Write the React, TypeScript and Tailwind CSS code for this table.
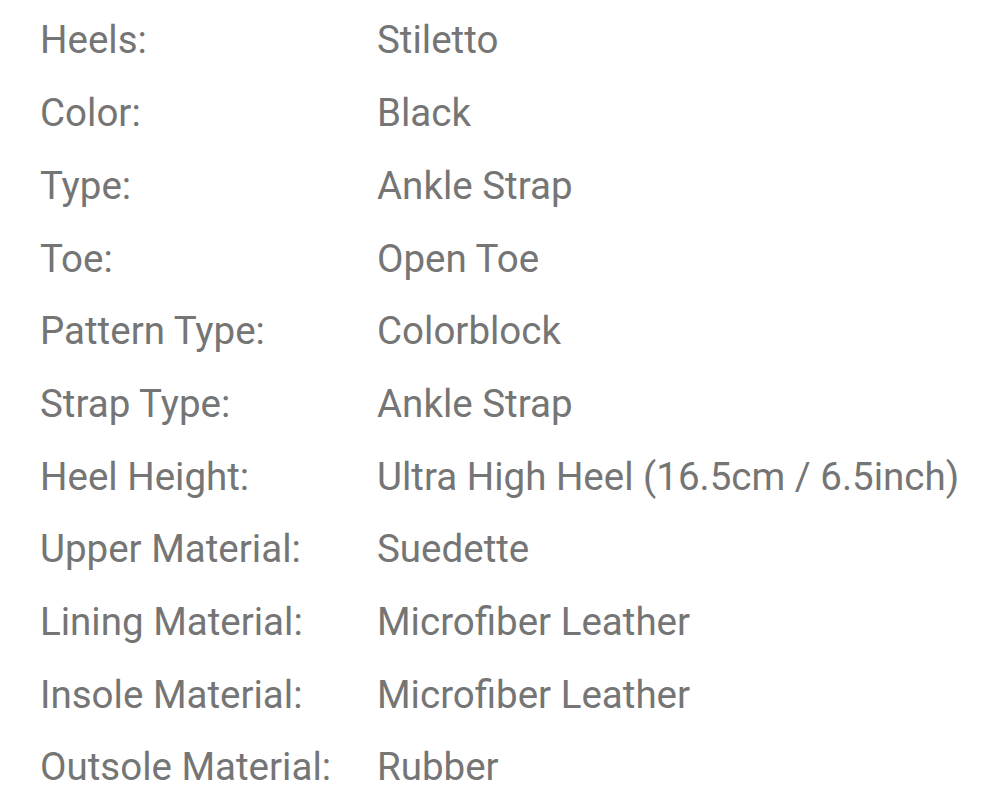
const specs: [string, string][] = [
  ['Heels:', 'Stiletto'],
  ['Color:', 'Black'],
  ['Type:', 'Ankle Strap'],
  ['Toe:', 'Open Toe'],
  ['Pattern Type:', 'Colorblock'],
  ['Strap Type:', 'Ankle Strap'],
  ['Heel Height:', 'Ultra High Heel (16.5cm / 6.5inch)'],
  ['Upper Material:', 'Suedette'],
  ['Lining Material:', 'Microfiber Leather'],
  ['Insole Material:', 'Microfiber Leather'],
  ['Outsole Material:', 'Rubber'],
];

export default function App() {
  return (
    <div className="min-h-[800px] w-[988px] bg-white pl-[40px] pt-[4px] font-['Roboto',sans-serif] text-[38.5px] text-[#757575]">
      {specs.map(([label, value]) => (
        <div key={label} className="flex h-[72.7px] items-center whitespace-nowrap">
          <div className="w-[337px] shrink-0">{label}</div>
          <div>{value}</div>
        </div>
      ))}
    </div>
  );
}
